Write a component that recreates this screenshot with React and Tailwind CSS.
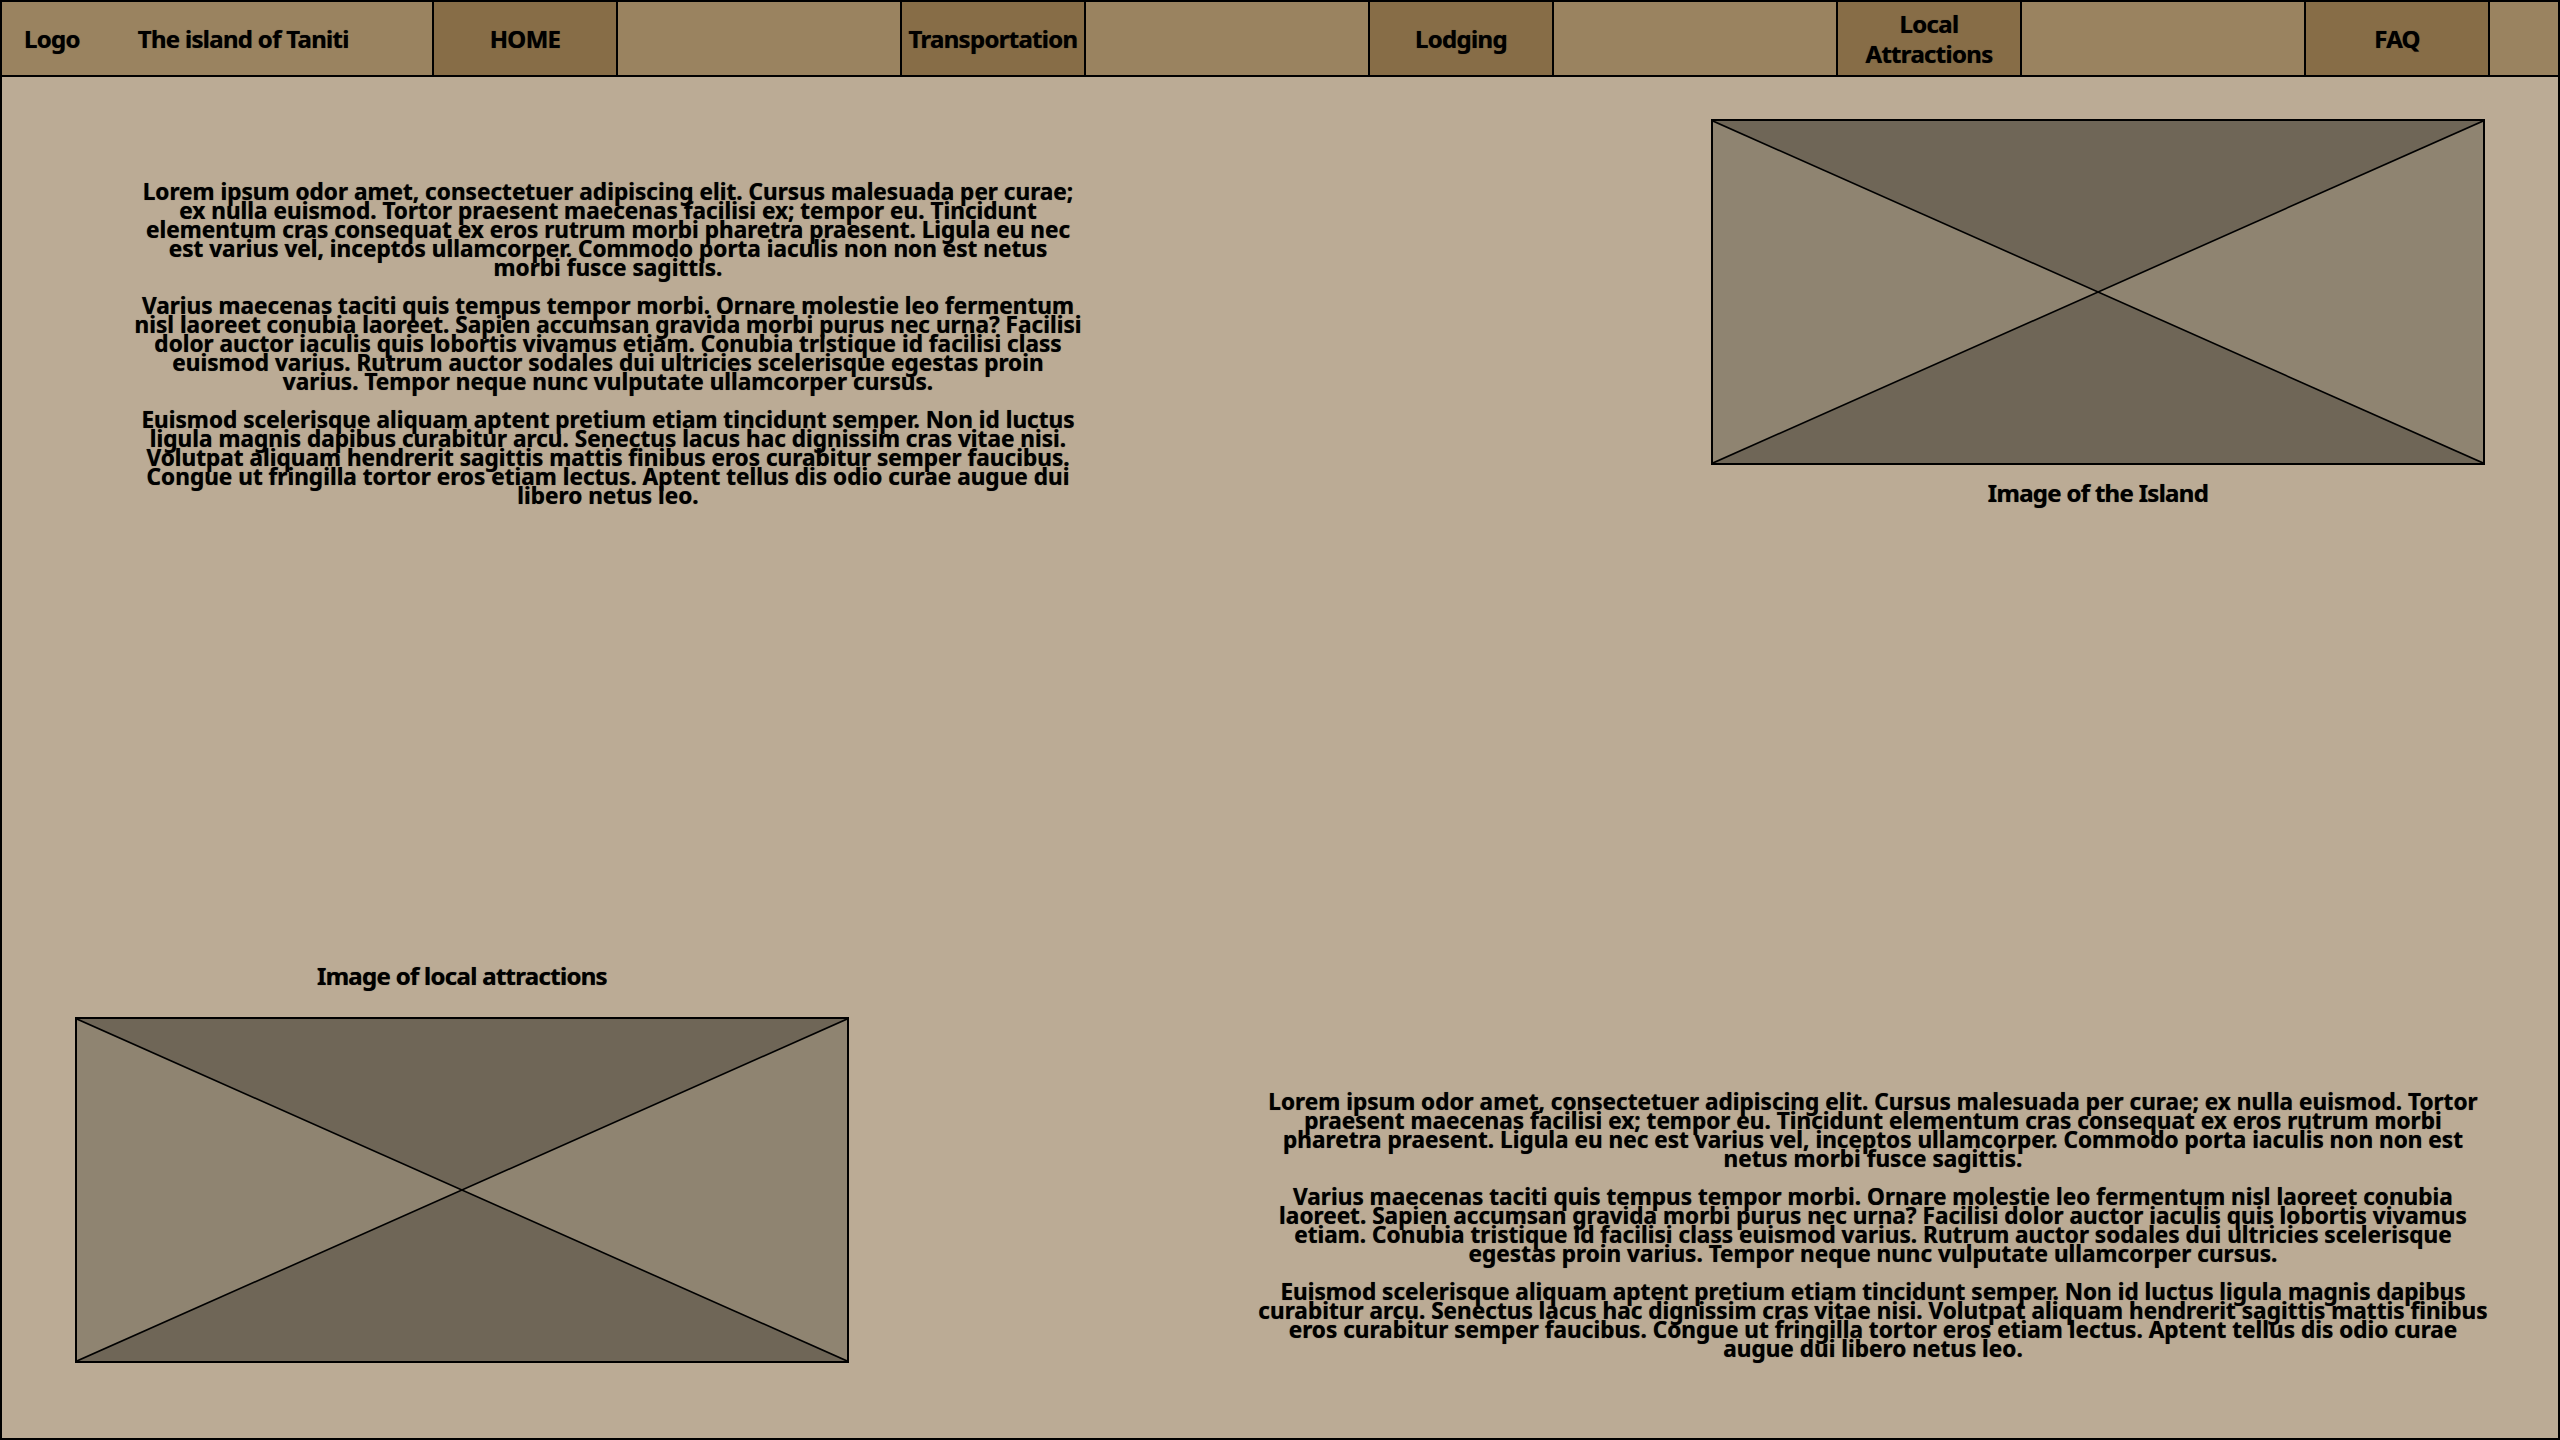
const topParagraphs = [
  'Lorem ipsum odor amet, consectetuer adipiscing elit. Cursus malesuada per curae; ex nulla euismod. Tortor praesent maecenas facilisi ex; tempor eu. Tincidunt elementum cras consequat ex eros rutrum morbi pharetra praesent. Ligula eu nec est varius vel, inceptos ullamcorper. Commodo porta iaculis non non est netus morbi fusce sagittis.',
  'Varius maecenas taciti quis tempus tempor morbi. Ornare molestie leo fermentum nisl laoreet conubia laoreet. Sapien accumsan gravida morbi purus nec urna? Facilisi dolor auctor iaculis quis lobortis vivamus etiam. Conubia tristique id facilisi class euismod varius. Rutrum auctor sodales dui ultricies scelerisque egestas proin varius. Tempor neque nunc vulputate ullamcorper cursus.',
  'Euismod scelerisque aliquam aptent pretium etiam tincidunt semper. Non id luctus ligula magnis dapibus curabitur arcu. Senectus lacus hac dignissim cras vitae nisi. Volutpat aliquam hendrerit sagittis mattis finibus eros curabitur semper faucibus. Congue ut fringilla tortor eros etiam lectus. Aptent tellus dis odio curae augue dui libero netus leo.',
];

const navItems = ['HOME', 'Transportation', 'Lodging', 'Local Attractions', 'FAQ'];

const Placeholder = () => (
  <div className="w-[774px] h-[346px] border-2 border-black bg-[#8f8471]">
    <svg viewBox="0 0 100 100" preserveAspectRatio="none" className="w-full h-full block">
      <polygon points="0,0 100,0 50,50" fill="#6f6657" />
      <polygon points="0,100 100,100 50,50" fill="#6f6657" />
      <line x1="0" y1="0" x2="100" y2="100" stroke="#000" strokeWidth="1.6" vectorEffect="non-scaling-stroke" />
      <line x1="100" y1="0" x2="0" y2="100" stroke="#000" strokeWidth="1.6" vectorEffect="non-scaling-stroke" />
    </svg>
  </div>
);

const TextBlock = ({ width }) => (
  <div className={`${width} flex flex-col gap-[19px] text-center text-[22.6px] leading-[19px] font-bold text-black [text-shadow:0_0_0.7px_rgba(0,0,0,0.7)]`}>
    {topParagraphs.map((p, i) => (
      <p key={i}>{p}</p>
    ))}
  </div>
);

export default function App() {
  return (
    <div className="w-[2560px] h-[1440px] border-2 border-black bg-[#bbab95] flex flex-col font-['Noto_Sans',sans-serif]">
      {/* top nav */}
      <header className="h-[75px] shrink-0 flex border-b-2 border-black bg-[#9a8360] text-[24px] leading-[30px] font-bold tracking-[-0.7px] text-black [text-shadow:0_0_0.7px_rgba(0,0,0,0.7)]">
        <div className="w-[430px] flex items-center pl-[22px]">
          <span>Logo</span>
          <span className="ml-[58px]">The island of Taniti</span>
        </div>
        {navItems.map((item, i) => (
          <div key={item} className="flex">
            <div className="w-[186px] px-[6px] border-x-2 border-black bg-[#876d47] flex items-center justify-center text-center">
              {item}
            </div>
            {i < navItems.length - 1 && <div className="w-[282px]" />}
          </div>
        ))}
        <div className="flex-1" />
      </header>

      <main className="flex-1 flex flex-col justify-between">
        <div className="flex justify-between items-start pl-[131px] pr-[73px]">
          <div className="mt-[105px]">
            <TextBlock width="w-[950px]" />
          </div>
          <div className="mt-[42px] flex flex-col items-center">
            <Placeholder />
            <p className="mt-[16px] text-[24px] leading-[24px] font-bold tracking-[-0.7px] [text-shadow:0_0_0.7px_rgba(0,0,0,0.7)]">Image of the Island</p>
          </div>
        </div>

        <div className="flex justify-between items-end pl-[73px] pr-[70px] pb-[75px]">
          <div className="flex flex-col items-center">
            <p className="mb-[29px] text-[24px] leading-[24px] font-bold tracking-[-0.7px] [text-shadow:0_0_0.7px_rgba(0,0,0,0.7)]">Image of local attractions</p>
            <Placeholder />
          </div>
          <div className="mb-[5px]">
            <TextBlock width="w-[1230px]" />
          </div>
        </div>
      </main>
    </div>
  );
}
